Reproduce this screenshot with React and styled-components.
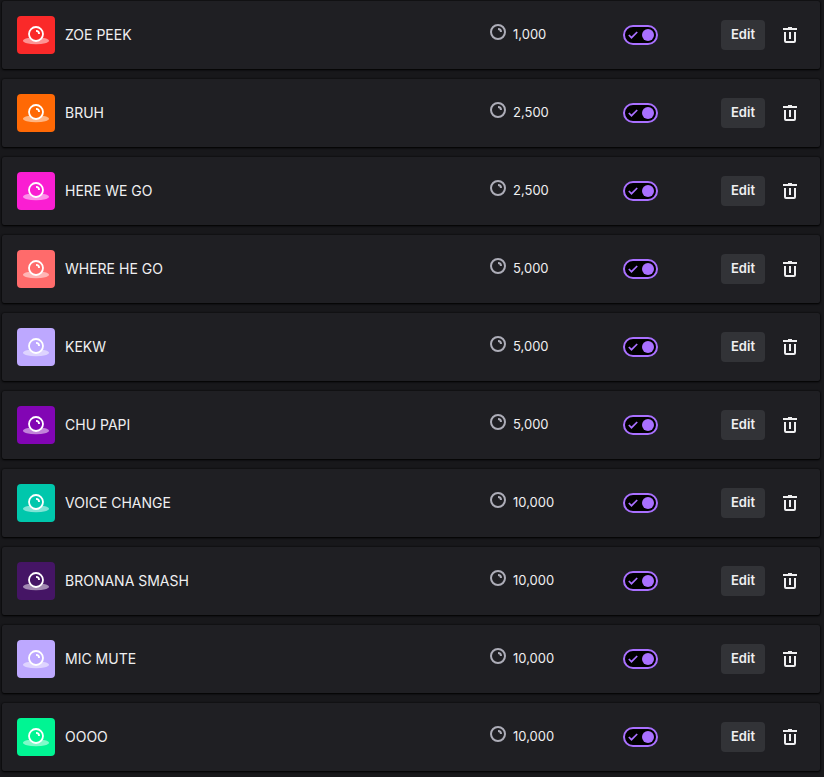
import React, { useState } from "react";
import styled, { createGlobalStyle } from "styled-components";

const GlobalStyle = createGlobalStyle`
  * {
    box-sizing: border-box;
  }

  body {
    margin: 0;
    background: #18181b;
    color: #efeff1;
    font-family: Inter, "Liberation Sans", sans-serif;
    font-size: 14px;
    line-height: 20px;
  }
`;

const List = styled.ul`
  display: flex;
  flex-direction: column;
  gap: 10px;
  margin: 0;
  padding: 1px 4px 5px 2px;
  list-style: none;
`;

const Card = styled.li`
  display: flex;
  align-items: center;
  padding: 15px 20px 15px 15px;
  background: #1f1f23;
  border-radius: 2px;
  box-shadow: 0 1px 2px rgba(0, 0, 0, 0.9), 0 0 2px rgba(0, 0, 0, 0.9);
`;

const Tile = styled.div`
  flex: none;
  width: 38px;
  height: 38px;
  border-radius: 4px;
  background: ${({ $color }) => $color};

  svg {
    display: block;
  }
`;

const Title = styled.span`
  flex: 1;
  min-width: 0;
  padding: 0 10px;
  overflow: hidden;
  text-overflow: ellipsis;
  white-space: nowrap;
`;

const Cost = styled.div`
  display: flex;
  flex: none;
  align-items: center;
  gap: 5px;
  width: 135px;
  padding-bottom: 2px;
  font-size: 13px;

  svg {
    margin-bottom: 4px;
    fill: #adadb8;
  }
`;

const Switch = styled.label`
  display: flex;
  flex: none;
  width: 98px;
`;

const SwitchInput = styled.input`
  appearance: none;
  width: 0;
  height: 0;
  margin: 0;
`;

const Track = styled.span`
  display: flex;
  align-items: center;
  justify-content: space-between;
  flex-direction: ${({ $on }) => ($on ? "row" : "row-reverse")};
  width: 35px;
  height: 20px;
  padding: 0 2px;
  border: 2px solid ${({ $on }) => ($on ? "#a970ff" : "#adadb8")};
  border-radius: 10px;
  background: #000;
  cursor: pointer;

  svg {
    visibility: ${({ $on }) => ($on ? "visible" : "hidden")};
  }
`;

const Knob = styled.span`
  width: 12px;
  height: 12px;
  border-radius: 50%;
  background: ${({ $on }) => ($on ? "#a970ff" : "#adadb8")};
`;

const EditButton = styled.button`
  flex: none;
  width: 44px;
  height: 30px;
  margin-right: 15px;
  padding: 0 0 2px;
  border: 0;
  border-radius: 4px;
  background: #323337;
  color: #efeff1;
  font: 600 13px/20px Inter, "Liberation Sans", sans-serif;
  cursor: pointer;
`;

const DeleteButton = styled.button`
  flex: none;
  padding: 0;
  border: 0;
  background: none;
  color: #efeff1;
  cursor: pointer;

  svg {
    display: block;
    fill: currentColor;
  }
`;

const rewards = [
  { title: "ZOE PEEK", cost: 1000, color: "#fa2929" },
  { title: "BRUH", cost: 2500, color: "#ff6905" },
  { title: "HERE WE GO", cost: 2500, color: "#fa1ed2" },
  { title: "WHERE HE GO", cost: 5000, color: "#ff6b6b" },
  { title: "KEKW", cost: 5000, color: "#bda8ff" },
  { title: "CHU PAPI", cost: 5000, color: "#8205b4" },
  { title: "VOICE CHANGE", cost: 10000, color: "#00c7ac" },
  { title: "BRONANA SMASH", cost: 10000, color: "#451565" },
  { title: "MIC MUTE", cost: 10000, color: "#bda8ff" },
  { title: "OOOO", cost: 10000, color: "#00f593" },
];

const RewardArt = ({ color }) => (
  <svg width="38" height="38" viewBox="0 0 38 38" aria-hidden="true">
    <ellipse cx="19" cy="24.7" rx="13" ry="3.5" fill="#fff" fillOpacity="0.5" />
    <circle cx="19" cy="18" r="7" fill={color} stroke="#fff" strokeWidth="1.8" />
    <path d="M19 14a4 4 0 0 1 4 4h-1.8a2.2 2.2 0 0 0-2.2-2.2z" fill="#fff" />
  </svg>
);

const PointsIcon = () => (
  <svg width="20" height="20" viewBox="0 0 20 20" aria-hidden="true">
    <path d="M10 6a4 4 0 0 1 4 4h-2a2 2 0 0 0-2-2V6z" />
    <path
      fillRule="evenodd"
      d="M18 10a8 8 0 1 1-16 0 8 8 0 0 1 16 0zm-2 0a6 6 0 1 1-12 0 6 6 0 0 1 12 0z"
    />
  </svg>
);

const CheckIcon = () => (
  <svg width="12" height="12" viewBox="0 0 12 12" aria-hidden="true">
    <path d="M1.8 6l2.7 2.7L10.2 3" fill="none" stroke="#a970ff" strokeWidth="1.7" />
  </svg>
);

const TrashIcon = () => (
  <svg width="20" height="20" viewBox="0 0 20 20" aria-hidden="true">
    <path d="M12 2H8v1H3v2h14V3h-5V2zM4 7v9a2 2 0 0 0 2 2h8a2 2 0 0 0 2-2V7h-2v9H6V7H4z" />
    <path d="M11 7H9v7h2V7z" />
  </svg>
);

const RewardRow = ({ title, cost, color }) => {
  const [enabled, setEnabled] = useState(true);

  return (
    <Card>
      <Tile $color={color}>
        <RewardArt color={color} />
      </Tile>
      <Title>{title}</Title>
      <Cost>
        <PointsIcon />
        <span>{cost.toLocaleString("en-US")}</span>
      </Cost>
      <Switch>
        <SwitchInput
          type="checkbox"
          aria-label={`Enable ${title}`}
          checked={enabled}
          onChange={() => setEnabled(!enabled)}
        />
        <Track $on={enabled}>
          <CheckIcon />
          <Knob $on={enabled} />
        </Track>
      </Switch>
      <EditButton type="button">Edit</EditButton>
      <DeleteButton type="button" aria-label={`Delete ${title}`}>
        <TrashIcon />
      </DeleteButton>
    </Card>
  );
};

const App = () => (
  <>
    <GlobalStyle />
    <List>
      {rewards.map((reward) => (
        <RewardRow key={reward.title} {...reward} />
      ))}
    </List>
  </>
);

export default App;
